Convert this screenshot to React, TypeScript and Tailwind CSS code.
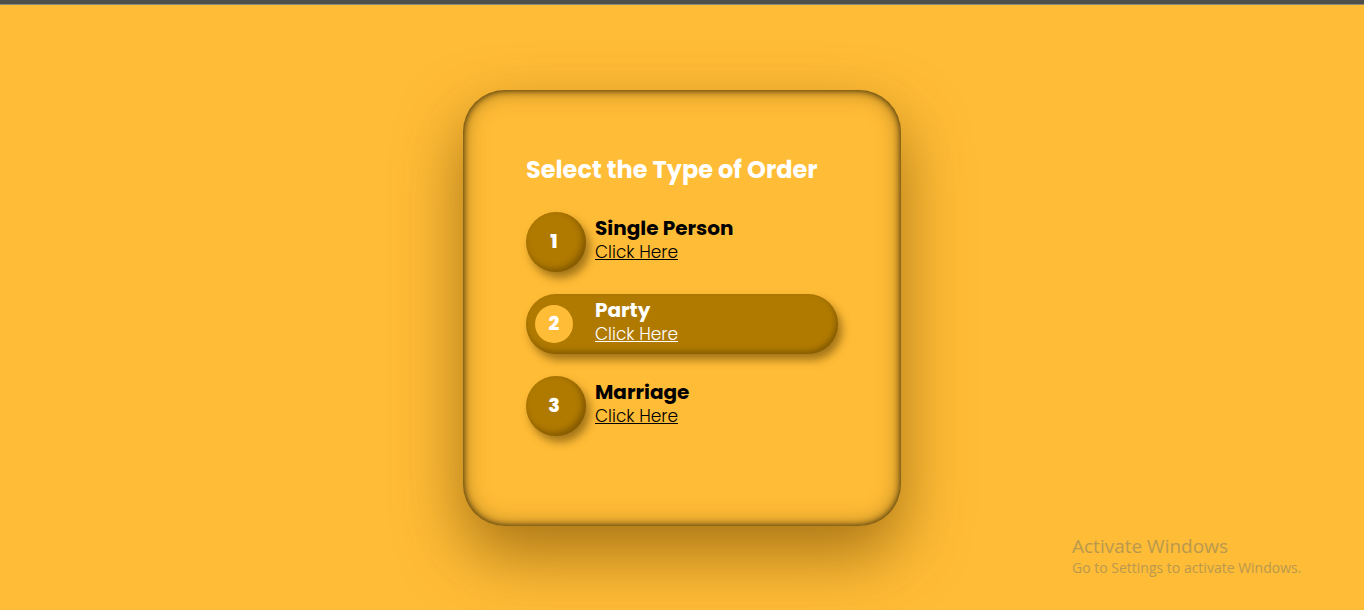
import React from 'react';

const options = [
  { num: 1, title: 'Single Person', active: false },
  { num: 2, title: 'Party', active: true },
  { num: 3, title: 'Marriage', active: false },
];

const App = () => {
  return (
    <div className="relative min-h-[610px] w-full bg-[#ffbc36] overflow-hidden" style={{ fontFamily: 'Poppins, Inter, "Noto Sans", sans-serif' }}>
      {/* browser chrome strip */}
      <div className="h-[4px] bg-[#4e4f4a]" />
      <div className="h-px bg-[#8d8a78]" />

      <div className="flex justify-center pt-[85px]">
        <div className="w-[438px] h-[436px] rounded-[42px] bg-[#ffbc36] pl-[63px] pt-[64px] shadow-[inset_0_0_7px_rgba(35,25,0,0.95),inset_0_0_22px_rgba(90,60,0,0.5),0_28px_64px_rgba(110,70,0,0.6)]">
          <h1 className="text-[24px] leading-[32px] font-bold text-white">Select the Type of Order</h1>

          <div className="mt-[26px] flex flex-col gap-[22px]">
            {options.map((o) => (
              <div
                key={o.num}
                className={
                  o.active
                    ? 'flex items-start w-[312px] h-[60px] rounded-full bg-[#b07a00] pl-[9px] shadow-[4px_6px_8px_rgba(90,60,0,0.55),inset_-2px_-3px_5px_rgba(70,45,0,0.4)]'
                    : 'flex items-start h-[60px]'
                }
              >
                {o.active ? (
                  <div className="mt-[11px] w-[38px] h-[38px] rounded-full bg-[#ffbc36] flex items-center justify-center text-white font-extrabold text-[19px]">
                    {o.num}
                  </div>
                ) : (
                  <div className="w-[60px] h-[60px] rounded-full bg-[#b07a00] pr-[4px] flex items-center justify-center text-white font-extrabold text-[19px] shadow-[4px_6px_8px_rgba(90,60,0,0.55),inset_-3px_-3px_6px_rgba(70,45,0,0.45)]">
                    {o.num}
                  </div>
                )}
                <div className={o.active ? 'ml-[22px] mt-[3px] flex flex-col items-start' : 'ml-[9px] mt-[3px] flex flex-col items-start'}>
                  <span className={o.active ? 'text-[20px] leading-[26px] font-bold text-white' : 'text-[20px] leading-[26px] font-bold text-black'}>{o.title}</span>
                  <a href="#" className={o.active ? 'text-[17px] leading-[23px] font-light underline text-white' : 'text-[17px] leading-[23px] font-light underline text-black'}>
                    Click Here
                  </a>
                </div>
              </div>
            ))}
          </div>
        </div>
      </div>

      {/* OS watermark */}
      <div className="absolute left-[1072px] top-[535px] text-[#b9994f]" style={{ fontFamily: '"Open Sans", "Noto Sans", sans-serif' }}>
        <div className="text-[19px] leading-[22px]">Activate Windows</div>
        <div className="text-[14px] leading-[20px] mt-[1px]">Go to Settings to activate Windows.</div>
      </div>
    </div>
  );
};

export default App;
